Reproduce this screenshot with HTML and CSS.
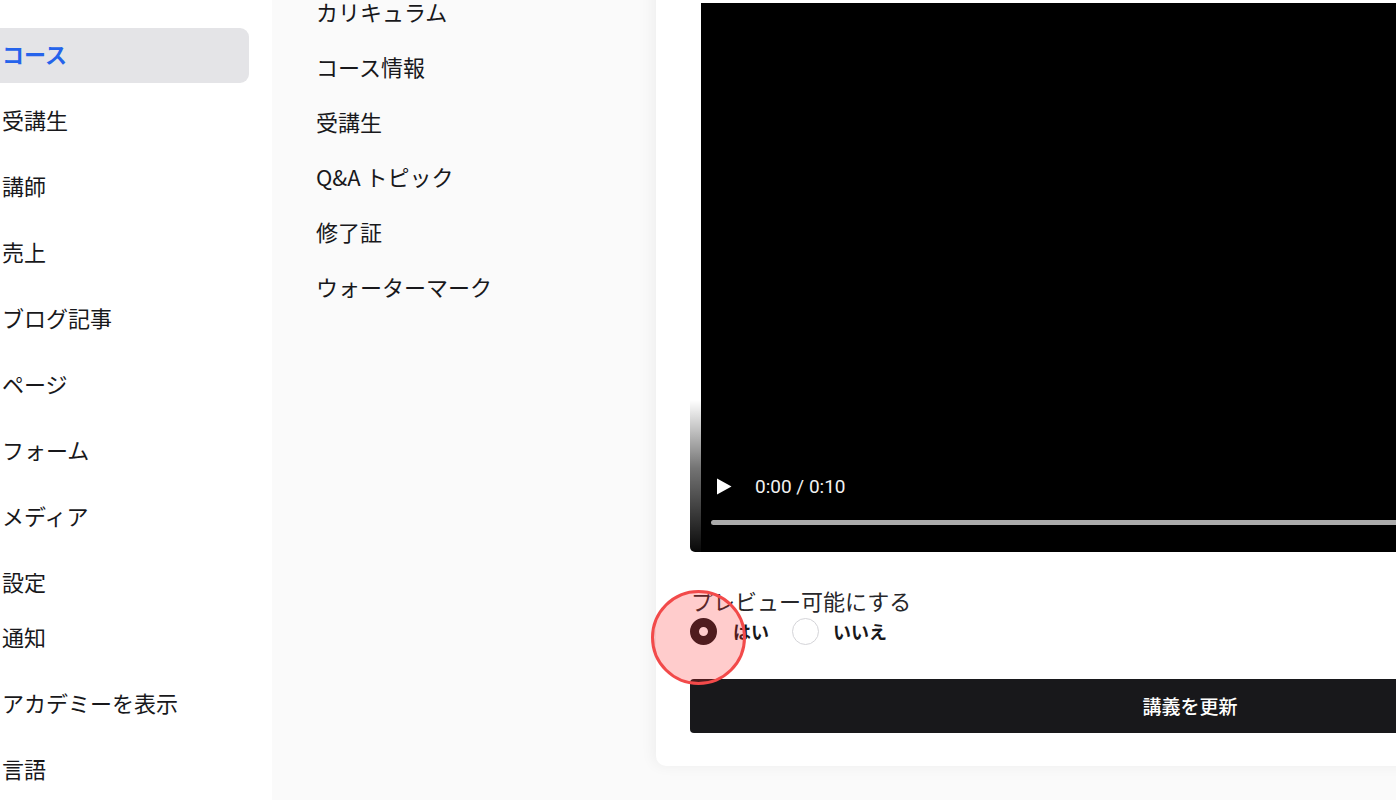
FILE: index.html
```html
<!DOCTYPE html>
<html lang="ja">
<head>
<meta charset="utf-8">
<title>講義の編集</title>
<link rel="stylesheet" href="styles.css">
</head>
<body>
<div class="app">
  <aside class="sidebar">
    <nav class="nav">
      <a class="nav-item active">コース</a>
      <a class="nav-item">受講生</a>
      <a class="nav-item">講師</a>
      <a class="nav-item">売上</a>
      <a class="nav-item">ブログ記事</a>
      <a class="nav-item">ページ</a>
      <a class="nav-item">フォーム</a>
      <a class="nav-item">メディア</a>
      <a class="nav-item">設定</a>
      <a class="nav-item tight">通知</a>
      <a class="nav-item">アカデミーを表示</a>
      <a class="nav-item">言語</a>
    </nav>
  </aside>
  <div class="subnav">
    <a class="sub-item">カリキュラム</a>
    <a class="sub-item">コース情報</a>
    <a class="sub-item">受講生</a>
    <a class="sub-item">Q&amp;A トピック</a>
    <a class="sub-item">修了証</a>
    <a class="sub-item">ウォーターマーク</a>
  </div>
  <main class="main">
    <section class="card">
      <div class="video">
        <div class="frame"></div>
        <div class="shade"></div>
        <div class="controls">
          <div class="ctrl-row">
            <svg class="play" width="16" height="17" viewBox="0 0 16 17"><path d="M1 0.5 L15.5 8.5 L1 16.5 Z" fill="#fff"/></svg>
            <span class="time">0:00 / 0:10</span>
          </div>
          <div class="progress"></div>
        </div>
      </div>
      <div class="field">
        <div class="field-label">プレビュー可能にする</div>
        <div class="radios">
          <label class="radio">
            <span class="dot checked"></span>
            <span class="radio-text">はい</span>
          </label>
          <label class="radio">
            <span class="dot"></span>
            <span class="radio-text">いいえ</span>
          </label>
        </div>
        <span class="tap"></span>
      </div>
      <button class="submit">講義を更新</button>
    </section>
  </main>
</div>
</body>
</html>
```

FILE: styles.css
```css
* { box-sizing: border-box; }
html, body {
  margin: 0;
  padding: 0;
  width: 1396px;
  height: 800px;
  overflow: hidden;
  background: #fafafa;
  font-family: "Noto Sans CJK JP", "Noto Sans", sans-serif;
  color: #18181b;
}
.app {
  display: flex;
  height: 800px;
  overflow: hidden;
}
.sidebar {
  width: 272px;
  flex-shrink: 0;
  background: #ffffff;
  padding-top: 28px;
  padding-right: 23px;
}
.nav {
  display: flex;
  flex-direction: column;
  gap: 11px;
  margin-left: -14px;
}
.nav-item {
  display: flex;
  align-items: center;
  height: 55px;
  padding-left: 16px;
  padding-bottom: 6px;
  font-size: 22px;
  line-height: 1;
  border-radius: 9px;
  color: #18181b;
}
.nav-item.tight { margin-top: -11px; }
.nav-item.active {
  background: #e4e4e7;
  color: #2563eb;
  font-weight: 700;
}
.subnav {
  width: 384px;
  flex-shrink: 0;
  background: #fafafa;
  display: flex;
  flex-direction: column;
  padding-left: 44px;
  margin-top: -14px;
}
.sub-item {
  display: flex;
  align-items: center;
  height: 55px;
  padding-bottom: 6px;
  font-size: 22px;
  line-height: 1;
  color: #18181b;
}
.main {
  flex: 1;
  min-width: 0;
  display: flex;
  flex-direction: column;
  justify-content: flex-end;
  padding-bottom: 34px;
}
.card {
  width: 1068px;
  flex-shrink: 0;
  background: #ffffff;
  border-radius: 10px;
  padding: 24px 34px 33px 34px;
  box-shadow: -3px 0 14px rgba(0, 0, 0, 0.05);
}
.video {
  position: relative;
  height: 549px;
  padding: 0 11px;
  border-radius: 0 0 5px 5px;
  overflow: hidden;
}
.frame {
  height: 100%;
  background: #000;
}
.shade {
  position: absolute;
  left: 0;
  right: 0;
  bottom: 0;
  height: 152px;
  background: linear-gradient(to bottom, rgba(0,0,0,0) 0%, rgba(0,0,0,0.55) 45%, rgba(0,0,0,0.97) 100%);
}
.controls {
  position: absolute;
  left: 21px;
  right: 21px;
  bottom: 27px;
  display: flex;
  flex-direction: column;
  gap: 22px;
}
.ctrl-row {
  display: flex;
  align-items: center;
  height: 24px;
  padding-left: 5px;
}
.play { display: block; }
.time {
  margin-left: 23px;
  font-family: Roboto, "Liberation Sans", sans-serif;
  font-size: 19px;
  color: #f2f2f2;
  line-height: 1;
}
.progress {
  height: 5px;
  border-radius: 3px;
  background: #ababab;
}
.field {
  position: relative;
  margin-top: 35px;
}
.field-label {
  font-size: 22px;
  line-height: 26px;
  height: 30px;
  padding-left: 1px;
  color: #27272a;
}
.radios {
  display: flex;
  align-items: center;
  gap: 23px;
  margin-top: 1px;
}
.radio {
  display: flex;
  align-items: center;
  gap: 16px;
}
.dot {
  width: 27px;
  height: 27px;
  border-radius: 50%;
  border: 1px solid #d4d4d8;
  background: #fff;
  flex-shrink: 0;
}
.dot.checked {
  border: 9px solid #18181b;
  background: #fff;
}
.radio-text {
  font-size: 18px;
  font-weight: 700;
  line-height: 27px;
  color: #18181b;
}
.radio:last-child .radio-text { margin-left: -2px; }
.tap {
  position: absolute;
  left: -39px;
  top: 3px;
  width: 95px;
  height: 95px;
  border-radius: 50%;
  background: rgba(255, 40, 40, 0.24);
  border: 3px solid #f24a4a;
}
.submit {
  display: block;
  width: 1000px;
  height: 54px;
  margin-top: 34px;
  padding-bottom: 2px;
  border: 0;
  border-radius: 4px;
  background: #18181b;
  color: #fff;
  font-family: "Noto Sans CJK JP", "Noto Sans", sans-serif;
  font-size: 19px;
  font-weight: 500;
}
```
